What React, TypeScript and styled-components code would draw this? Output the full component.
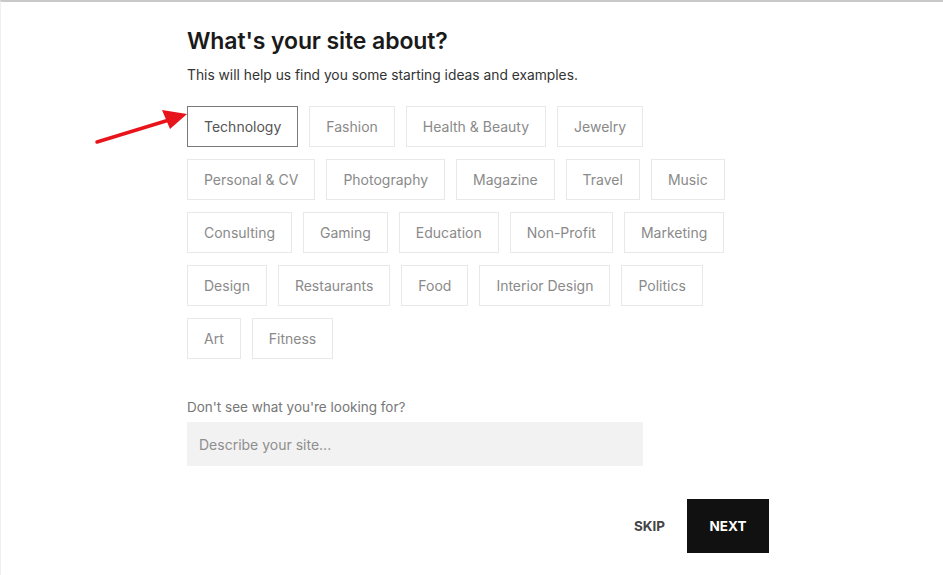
import React from "react";
import styled, { createGlobalStyle } from "styled-components";

const GlobalStyle = createGlobalStyle`
  html, body {
    margin: 0;
    padding: 0;
    background: #ffffff;
  }
  body {
    font-family: Inter, "Liberation Sans", Arial, sans-serif;
  }
`;

const Page = styled.div`
  width: 100%;
  min-height: 575px;
  box-sizing: border-box;
  border-top: 2px solid #c9c9c9;
  border-left: 1px solid #f0f0f0;
  position: relative;
`;

const Content = styled.div`
  padding: 25px 0 0 186px;
  display: flex;
  flex-direction: column;
`;

const Title = styled.h1`
  margin: 0;
  font-size: 23px;
  line-height: 28px;
  font-weight: 600;
  color: #1a1a1a;
  letter-spacing: -0.1px;
`;

const Subtitle = styled.p`
  margin: 11px 0 0;
  font-size: 13.8px;
  line-height: 18px;
  color: #333;
`;

const Chips = styled.div`
  margin-top: 22px;
  display: flex;
  flex-direction: column;
  gap: 12px;
`;

const ChipRow = styled.div`
  display: flex;
  gap: 11px;
`;

const Chip = styled.button<{ $selected?: boolean }>`
  height: 41px;
  padding: 0 16px;
  box-sizing: border-box;
  background: #fff;
  border: 1px solid ${(p) => (p.$selected ? "#7a7a7a" : "#e8e8e8")};
  color: ${(p) => (p.$selected ? "#555" : "#8a8a8a")};
  font-family: Inter, "Liberation Sans", Arial, sans-serif;
  font-size: 14px;
  cursor: pointer;
  white-space: nowrap;
`;

const Label = styled.div`
  margin-top: 39px;
  font-size: 13.5px;
  line-height: 18px;
  color: #777;
`;

const Input = styled.input`
  margin-top: 6px;
  width: 456px;
  height: 44px;
  box-sizing: border-box;
  border: none;
  outline: none;
  background: #f2f2f2;
  padding: 0 12px;
  font-family: Inter, "Liberation Sans", Arial, sans-serif;
  font-size: 14px;
  color: #333;

  &::placeholder {
    color: #8e8e8e;
  }
`;

const Actions = styled.div`
  margin-top: 33px;
  width: 582px;
  display: flex;
  justify-content: flex-end;
  align-items: center;
  gap: 22px;
`;

const Skip = styled.button`
  background: none;
  border: none;
  padding: 0;
  font-family: Inter, "Liberation Sans", Arial, sans-serif;
  font-size: 13.5px;
  font-weight: 700;
  color: #444;
  cursor: pointer;
`;

const Next = styled.button`
  width: 82px;
  height: 54px;
  background: #111;
  border: none;
  color: #fff;
  font-family: Inter, "Liberation Sans", Arial, sans-serif;
  font-size: 13.5px;
  font-weight: 700;
  cursor: pointer;
`;

const Arrow = styled.svg`
  position: absolute;
  left: 92px;
  top: 106px;
`;

const rows = [
  ["Technology", "Fashion", "Health & Beauty", "Jewelry"],
  ["Personal & CV", "Photography", "Magazine", "Travel", "Music"],
  ["Consulting", "Gaming", "Education", "Non-Profit", "Marketing"],
  ["Design", "Restaurants", "Food", "Interior Design", "Politics"],
  ["Art", "Fitness"],
];

const App = () => {
  return (
    <>
      <GlobalStyle />
      <Page>
        <Content>
          <Title>What's your site about?</Title>
          <Subtitle>This will help us find you some starting ideas and examples.</Subtitle>
          <Chips>
            {rows.map((row, i) => (
              <ChipRow key={i}>
                {row.map((c) => (
                  <Chip key={c} $selected={c === "Technology"}>
                    {c}
                  </Chip>
                ))}
              </ChipRow>
            ))}
          </Chips>
          <Label>Don't see what you're looking for?</Label>
          <Input placeholder="Describe your site..." />
          <Actions>
            <Skip>SKIP</Skip>
            <Next>NEXT</Next>
          </Actions>
        </Content>
        <Arrow width="96" height="40" viewBox="0 0 96 40">
          <line x1="4" y1="34" x2="76" y2="12" stroke="#e8141b" strokeWidth="3.5" strokeLinecap="round" />
          <polygon points="94,6 69,2 77,21" fill="#e8141b" />
        </Arrow>
      </Page>
    </>
  );
};

export default App;
